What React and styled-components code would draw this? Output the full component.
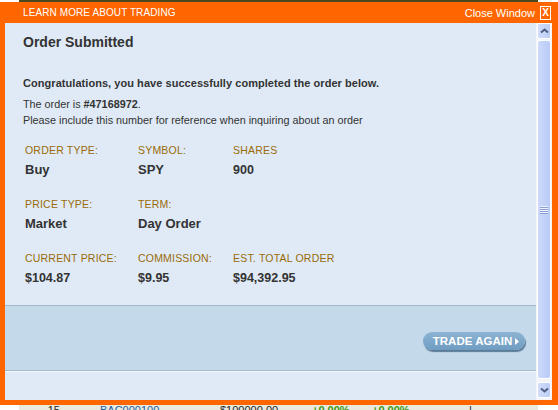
import React from 'react';
import styled, { createGlobalStyle } from 'styled-components';

const GlobalStyle = createGlobalStyle`
  html, body {
    margin: 0;
    padding: 0;
    background: #ffffff;
    overflow: hidden;
  }
  body {
    font-family: 'Liberation Sans', Arial, sans-serif;
  }
`;

const Page = styled.div`
  position: relative;
  width: 558px;
  height: 410px;
  overflow: hidden;
  background: #ffffff;
`;

// page behind the popup, only its edges show
const BackPage = styled.div`
  margin-left: 19px;
  width: 519px;
  height: 410px;
  display: flex;
  flex-direction: column;
  background: #e9e9dd;
`;

const TopStrip = styled.div`
  height: 2px;
  background: #4b4a1e;
`;

const Filler = styled.div`
  flex: 1;
`;

const BackRow = styled.div`
  display: flex;
  height: 14px;
  margin-bottom: -7px;
  font-size: 11px;
  line-height: 14px;
  color: #222;
`;

const BackCell = styled.div`
  width: ${(p) => p.w}px;
  text-align: ${(p) => p.align || 'left'};
  color: ${(p) => p.color || '#222'};
  font-weight: ${(p) => (p.bold ? 'bold' : 'normal')};
`;

const Modal = styled.div`
  position: absolute;
  top: 2px;
  left: 0;
  right: 0;
  height: 403px;
  display: flex;
  flex-direction: column;
  background: #ff6600;
`;

const Header = styled.div`
  height: 21px;
  display: flex;
  align-items: center;
  justify-content: space-between;
  padding: 0 7px 0 23px;
  color: #ffffff;
  font-size: 10px;
`;

const HeaderTitle = styled.span`
  text-transform: uppercase;
  letter-spacing: 0.1px;
`;

const CloseLink = styled.span`
  display: flex;
  align-items: center;
  gap: 5px;
  font-size: 11px;
`;

const CloseBox = styled.span`
  width: 9px;
  height: 12px;
  border: 1px solid #ffffff;
  display: flex;
  align-items: center;
  justify-content: center;
  font-size: 10px;
  font-weight: bold;
  line-height: 1;
`;

const Body = styled.div`
  flex: 1;
  display: flex;
  padding: 0 6px 5px 5px;
  min-height: 0;
`;

const Content = styled.div`
  flex: 1;
  display: flex;
  flex-direction: column;
  background: #dfeaf6;
`;

const Main = styled.div`
  height: 282px;
  padding: 11px 18px 0;
  box-sizing: border-box;
  color: #333333;
`;

const Title = styled.h1`
  margin: 0;
  font-size: 14px;
  line-height: 16px;
  font-weight: bold;
`;

const Lead = styled.p`
  margin: 27px 0 0;
  font-size: 11px;
  line-height: 12px;
  font-weight: bold;
  letter-spacing: 0.05px;
`;

const Note = styled.p`
  margin: 7px 0 0;
  font-size: 10.8px;
  line-height: 16px;

  b {
    font-weight: bold;
  }
`;

const Fields = styled.div`
  margin-top: 15px;
  padding-left: 2px;
  display: grid;
  grid-template-columns: 113px 95px 1fr;
  row-gap: 19px;
`;

const Field = styled.div`
  display: flex;
  flex-direction: column;
`;

const Label = styled.span`
  font-size: 10.5px;
  line-height: 14px;
  color: #9a6a08;
  text-transform: uppercase;
  letter-spacing: 0.2px;
`;

const Value = styled.span`
  margin-top: 5px;
  font-size: ${(p) => (p.small ? 12.5 : 13)}px;
  line-height: 16px;
  font-weight: bold;
  color: #333333;
`;

const Band = styled.div`
  height: 66px;
  display: flex;
  align-items: center;
  justify-content: flex-end;
  padding: 6px 11px 0 0;
  box-sizing: border-box;
  background: #c4daea;
  border-top: 1px solid #a4b8cc;
  border-bottom: 1px solid #a4b8cc;
  box-shadow: 0 1px 0 #f4f8fc;
`;

const Bottom = styled.div`
  flex: 1;
`;

const TradeButton = styled.button`
  height: 18px;
  width: 102px;
  padding: 0 0 0 4px;
  border: none;
  border-radius: 9px;
  background: linear-gradient(#8cb3d3, #6f9cc2);
  box-shadow: 1px 2px 1px #5b7a98;
  color: #ffffff;
  font-family: 'Liberation Sans', Arial, sans-serif;
  font-size: 11.5px;
  font-weight: bold;
  display: flex;
  align-items: center;
  justify-content: center;
  gap: 3px;
  cursor: pointer;
`;

const Scrollbar = styled.div`
  width: 16px;
  display: flex;
  flex-direction: column;
  gap: 1px;
  padding: 0 1px 2px;
  box-sizing: border-box;
  background: #f3f5fb;
`;

const ScrollButton = styled.div`
  margin-top: ${(p) => (p.down ? '2px' : '0')};
  display: flex;
  align-items: center;
  justify-content: center;
  background: linear-gradient(90deg, #d2ddfb, #bccdf6);
  border: 1px solid #ffffff;
  border-radius: 2px;
  box-sizing: border-box;
  height: 16px;
`;

const Thumb = styled.div`
  flex: 1;
  display: flex;
  align-items: center;
  justify-content: center;
  background: linear-gradient(90deg, #cdd9fb, #b9cbf6);
  border: 1px solid #ffffff;
  border-radius: 3px;
`;

const Chevron = ({ down }) => (
  <svg width="9" height="6" viewBox="0 0 9 6">
    <path
      d={down ? 'M1 1.5 L4.5 4.5 L8 1.5' : 'M1 4.5 L4.5 1.5 L8 4.5'}
      fill="none"
      stroke="#4e5f82"
      strokeWidth="2"
    />
  </svg>
);

const Grip = () => (
  <svg width="8" height="8" viewBox="0 0 8 8">
    {[0, 2, 4, 6].map((y) => (
      <g key={y}>
        <rect x="0" y={y} width="8" height="1" fill="#eef2ff" />
        <rect x="0" y={y + 1} width="8" height="1" fill="#8c9fd0" />
      </g>
    ))}
  </svg>
);

const fields = [
  { label: 'Order Type:', value: 'Buy' },
  { label: 'Symbol:', value: 'SPY' },
  { label: 'Shares', value: '900', small: true },
  { label: 'Price Type:', value: 'Market' },
  { label: 'Term:', value: 'Day Order' },
  null,
  { label: 'Current Price:', value: '$104.87', small: true },
  { label: 'Commission:', value: '$9.95', small: true },
  { label: 'Est. Total Order', value: '$94,392.95', small: true },
];

export default function App() {
  return (
    <>
      <GlobalStyle />
      <Page>
        <BackPage>
          <TopStrip />
          <Filler />
          <BackRow>
            <BackCell w={41} align="right">15</BackCell>
            <BackCell w={40} />
            <BackCell w={120} color="#1a5fa8">BAC000100</BackCell>
            <BackCell w={92}>$100000.00</BackCell>
            <BackCell w={60} color="#3a9a10" bold>+0.00%</BackCell>
            <BackCell w={97} color="#3a9a10" bold>+0.00%</BackCell>
            <BackCell w={10}>|</BackCell>
          </BackRow>
        </BackPage>

        <Modal>
          <Header>
            <HeaderTitle>Learn more about trading</HeaderTitle>
            <CloseLink>
              Close Window
              <CloseBox>X</CloseBox>
            </CloseLink>
          </Header>
          <Body>
            <Content>
              <Main>
                <Title>Order Submitted</Title>
                <Lead>Congratulations, you have successfully completed the order below.</Lead>
                <Note>
                  The order is <b>#47168972</b>.
                  <br />
                  Please include this number for reference when inquiring about an order
                </Note>
                <Fields>
                  {fields.map((f, i) =>
                    f ? (
                      <Field key={i}>
                        <Label>{f.label}</Label>
                        <Value small={f.small}>{f.value}</Value>
                      </Field>
                    ) : (
                      <div key={i} />
                    )
                  )}
                </Fields>
              </Main>
              <Band>
                <TradeButton>
                  TRADE AGAIN
                  <svg width="4" height="7" viewBox="0 0 4 7">
                    <path d="M0 0 L4 3.5 L0 7 Z" fill="#ffffff" />
                  </svg>
                </TradeButton>
              </Band>
              <Bottom />
            </Content>
            <Scrollbar>
              <ScrollButton>
                <Chevron />
              </ScrollButton>
              <Thumb>
                <Grip />
              </Thumb>
              <ScrollButton down>
                <Chevron down />
              </ScrollButton>
            </Scrollbar>
          </Body>
        </Modal>
      </Page>
    </>
  );
}
